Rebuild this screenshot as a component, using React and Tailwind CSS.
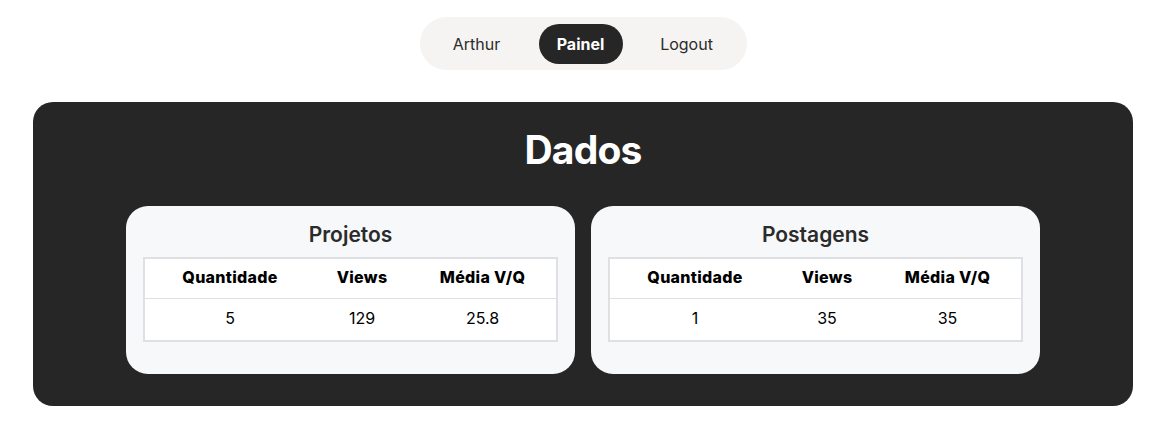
import React from "react";

const stats = [
  { title: "Projetos", qtd: "5", views: "129", media: "25.8" },
  { title: "Postagens", qtd: "1", views: "35", media: "35" },
];

function StatCard({ title, qtd, views, media }) {
  return (
    <div className="w-[449px] h-[168px] bg-[#f7f8fa] rounded-[22px] px-[17px] pt-[16px]">
      <h2 className="text-center text-[21px] font-semibold text-[#2b2b2b] leading-[26px]">
        {title}
      </h2>
      <div className="mt-[9px] bg-white border-[2px] border-[#dee0e4] text-black">
        <div className="grid grid-cols-[170px_94px_1fr] h-[40px] items-center border-b border-[#dee0e4] font-extrabold text-[16px] tracking-[0.3px] pb-[3px]">
          <span className="text-center">Quantidade</span>
          <span className="text-center">Views</span>
          <span className="text-center">Média V/Q</span>
        </div>
        <div className="grid grid-cols-[170px_94px_1fr] h-[41px] items-center text-[16px] pb-[3px]">
          <span className="text-center">{qtd}</span>
          <span className="text-center">{views}</span>
          <span className="text-center">{media}</span>
        </div>
      </div>
    </div>
  );
}

export default function App() {
  return (
    <div className="min-h-screen bg-white pt-[17px] font-['Inter','Liberation_Sans',sans-serif]">
      <div className="w-[1166px]">
        <nav className="mx-auto w-[327px] h-[53px] bg-[#f5f4f2] rounded-full flex items-center pl-[7px] pr-[8px] gap-[12px] text-[16px] text-[#2b2b2b]">
          <a className="w-[100px] h-[40px] flex items-center justify-center">Arthur</a>
          <a className="w-[84px] h-[40px] flex items-center justify-center rounded-full bg-[#262626] text-white font-bold">
            Painel
          </a>
          <a className="w-[104px] h-[40px] flex items-center justify-center">Logout</a>
        </nav>

        <section className="mt-[32px] mx-[33px] h-[304px] bg-[#262626] rounded-[20px] pt-[24px]">
          <h1 className="text-center text-white text-[39px] font-bold leading-[48px] tracking-[-0.8px]">
            Dados
          </h1>
          <div className="mt-[32px] flex justify-center gap-[16px]">
            {stats.map((s) => (
              <StatCard key={s.title} {...s} />
            ))}
          </div>
        </section>
      </div>
    </div>
  );
}
